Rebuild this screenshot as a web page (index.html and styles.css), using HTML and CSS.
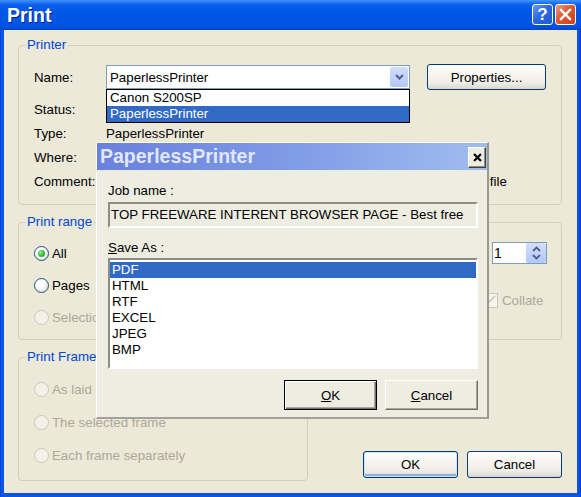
FILE: index.html
```html
<!DOCTYPE html>
<html>
<head>
<meta charset="utf-8">
<title>Print</title>
<link rel="stylesheet" href="styles.css">
</head>
<body>
<div class="window">
  <div class="titlebar">
    <span class="title">Print</span>
    <div class="tbtns">
      <span class="tbtn help">?</span>
      <span class="tbtn close"><svg width="13" height="13" viewBox="0 0 13 13"><path d="M2 2 L11 11 M11 2 L2 11" stroke="#fff" stroke-width="2.4" stroke-linecap="square"/></svg></span>
    </div>
  </div>

  <div class="client">
    <fieldset class="group printer">
      <legend>Printer</legend>
      <div class="pbody">
        <div class="prow name">
          <span>Name:</span>
          <div class="combo">
            <span class="combo-text">PaperlessPrinter</span>
            <span class="combo-btn"><svg width="9" height="6" viewBox="0 0 9 6"><path d="M1 1 L4.5 4.5 L8 1" fill="none" stroke="#4D6185" stroke-width="2"/></svg></span>
            <ul class="droplist">
              <li>Canon S200SP</li>
              <li class="sel">PaperlessPrinter</li>
            </ul>
          </div>
          <button class="xpbtn props">Properties...</button>
        </div>
        <div class="prow"><span>Status:</span></div>
        <div class="prow"><span>Type:</span><span>PaperlessPrinter</span></div>
        <div class="prow"><span>Where:</span></div>
        <div class="prow"><span>Comment:</span><span></span>
          <label class="check"><span class="box"></span><span>Print to file</span></label>
        </div>
      </div>
    </fieldset>

    <div class="row2">
      <fieldset class="group range">
        <legend>Print range</legend>
        <div class="opts">
          <div class="opt"><span class="radio on"><span class="dot"></span></span><span>All</span></div>
          <div class="opt"><span class="radio"></span><span>Pages</span></div>
          <div class="opt dis"><span class="radio"></span><span>Selection</span></div>
        </div>
      </fieldset>
      <div class="group copies">
        <div class="spinrow">
          <div class="spin">
            <span class="spin-val">1</span>
            <span class="spin-btn">
              <svg width="9" height="6" viewBox="0 0 9 6"><path d="M1 5 L4.5 1.5 L8 5" fill="none" stroke="#4D6185" stroke-width="1.8"/></svg>
              <svg width="9" height="6" viewBox="0 0 9 6"><path d="M1 1 L4.5 4.5 L8 1" fill="none" stroke="#4D6185" stroke-width="1.8"/></svg>
            </span>
          </div>
        </div>
        <div class="collate">
          <span class="cbox"><svg width="13" height="13" viewBox="0 0 13 13"><path d="M2 11 L11 2" stroke="#C9C7BA" stroke-width="1.6"/></svg></span>
          <span>Collate</span>
        </div>
      </div>
    </div>

    <div class="row3">
      <fieldset class="group frame">
        <legend>Print Frame</legend>
        <div class="opts frame-opts">
          <div class="opt dis"><span class="radio"></span><span>As laid out on screen</span></div>
          <div class="opt dis"><span class="radio"></span><span>The selected frame</span></div>
          <div class="opt dis"><span class="radio"></span><span>Each frame separately</span></div>
        </div>
      </fieldset>
      <div class="mainbtns">
        <button class="xpbtn default">OK</button>
        <button class="xpbtn">Cancel</button>
      </div>
    </div>
  </div>

  <div class="dlg">
    <div class="dlg-title">
      <span class="dlg-caption">PaperlessPrinter</span>
      <span class="dlg-close"><svg width="9" height="9" viewBox="0 0 9 9"><path d="M1 1 L8 8 M8 1 L1 8" stroke="#000" stroke-width="2.2"/></svg></span>
    </div>
    <div class="dlg-body">
      <div class="dlbl">Job name :</div>
      <div class="field">TOP FREEWARE INTERENT BROWSER PAGE - Best free</div>
      <div class="dlbl save"><u>S</u>ave As :</div>
      <ul class="list">
        <li class="sel">PDF</li>
        <li>HTML</li>
        <li>RTF</li>
        <li>EXCEL</li>
        <li>JPEG</li>
        <li>BMP</li>
      </ul>
      <div class="dlg-btns">
        <button class="cbtn def"><u>O</u>K</button>
        <button class="cbtn"><u>C</u>ancel</button>
      </div>
    </div>
  </div>
</div>
</body>
</html>
```

FILE: styles.css
```css
* { box-sizing: border-box; }
html, body { margin: 0; padding: 0; }
body {
  width: 581px;
  height: 497px;
  overflow: hidden;
  font-family: "Liberation Sans", Arial, sans-serif;
  font-size: 13.3px;
  color: #000;
  background: #0A52E0;
}

.window {
  position: relative;
  width: 581px;
  height: 497px;
  display: flex;
  flex-direction: column;
  background: linear-gradient(90deg, #0831D9 0, #0A5AE8 1px, #0B56E2 3px, #0B56E2 577px, #0A4BDA 580px, #0831D9 581px);
  padding: 0 4px 4px 4px;
}

/* ---------- title bar ---------- */
.titlebar {
  height: 30px;
  margin: 0 -4px;
  display: flex;
  align-items: center;
  padding: 0 5px 0 7px;
  background: linear-gradient(180deg, #3D95FF 0px, #2A7CF4 2px, #0B60EA 5px, #0056E6 12px, #0055E6 22px, #0050DF 27px, #0042CC 30px);
}
.title {
  color: #fff;
  font-weight: bold;
  font-size: 19.5px;
  text-shadow: 1px 1px 0 #0A1A8A;
  margin-top: 1px;
}
.tbtns {
  margin-left: auto;
  display: flex;
  gap: 2px;
  margin-top: -1px;
}
.tbtn {
  width: 21px;
  height: 21px;
  border: 1px solid #fff;
  border-radius: 3px;
  display: flex;
  align-items: center;
  justify-content: center;
  color: #fff;
}
.help {
  background: linear-gradient(135deg, #6A9CF9 0%, #2C68E0 45%, #1E58D4 100%);
  font-weight: bold;
  font-size: 17px;
  line-height: 1;
}
.close {
  background: linear-gradient(135deg, #EF9A7D 0%, #DD5A34 45%, #C9401A 100%);
}

/* ---------- client ---------- */
.client {
  flex: 1;
  background: #ECE9D8;
  padding: 8px 15px 0 14px;
}
.group {
  margin: 0;
  padding: 0;
  min-width: 0;
  border: 1px solid #D0D0BF;
  border-radius: 4px;
}
.group legend {
  margin-left: 6px;
  padding: 0 2px;
  color: #0046D5;
  font-size: 13.3px;
  line-height: 14px;
}

/* printer group */
.printer { width: 544px; height: 167px; }
.pbody { padding: 12px 0 0 15px; }
.prow {
  display: grid;
  grid-template-columns: 72px 321px 119px;
  align-items: center;
  height: 24px;
}
.prow.name { height: 26px; margin-bottom: 7px; }

.combo {
  position: relative;
  width: 304px;
  height: 24px;
  border: 1px solid #7F9DB9;
  background: #fff;
  display: flex;
  align-items: center;
}
.combo-text { flex: 1; padding-left: 3px; }
.combo-btn {
  width: 18px;
  height: 20px;
  margin-right: 1px;
  border-radius: 2px;
  background: linear-gradient(180deg, #D2DEFC 0%, #C1D3FB 50%, #B3C8F6 100%);
  display: flex;
  align-items: center;
  justify-content: center;
}
.droplist {
  position: absolute;
  left: -1px;
  top: 23px;
  width: 304px;
  margin: 0;
  padding: 0;
  list-style: none;
  border: 1px solid #000;
  background: #fff;
}
.droplist li { height: 16px; line-height: 16px; padding-left: 3px; }
.droplist li.sel { background: #316AC5; color: #fff; }

.xpbtn {
  font: inherit;
  color: #000;
  padding: 0;
  border: 1px solid #003C74;
  border-radius: 3px;
  background: linear-gradient(180deg, #FFFFFF 0%, #F7F6F2 35%, #EEEDE7 75%, #E2DFD6 92%, #D6D0C5 100%);
}
.xpbtn.default {
  box-shadow: inset 0 0 0 1px #CEE7FF, inset 0 -2px 0 1px #8FAEEA;
}
.props { width: 119px; height: 26px; }

.check { display: flex; align-items: center; gap: 2px; }
.box { width: 15px; height: 15px; border: 1px solid #1C5180; background: #fff; }

/* row 2 */
.row2 { display: flex; gap: 10px; margin-top: 10px; }
.range { width: 290px; height: 125px; }
.copies { width: 244px; height: 118px; margin-top: 7px; }

.opts {
  display: flex;
  flex-direction: column;
  gap: 12px;
  padding: 14px 0 0 15px;
}
.opt { height: 20px; display: flex; align-items: center; gap: 3px; }
.opt.dis { color: #ACA899; }
.radio {
  width: 15px;
  height: 15px;
  border-radius: 50%;
  border: 1px solid #1C5180;
  background: radial-gradient(circle at 35% 35%, #FFFFFF 35%, #E8E6DD 70%, #D2CFC2 100%);
  display: flex;
  align-items: center;
  justify-content: center;
}
.opt.dis .radio {
  border-color: #CAC8BB;
  background: #F3F1E8;
}
.dot {
  width: 7px;
  height: 7px;
  border-radius: 50%;
  background: radial-gradient(circle at 35% 35%, #9FEA9A 0%, #3CC23C 45%, #1C9A1C 100%);
}

.spinrow { display: flex; justify-content: flex-end; padding: 19px 14px 0 0; }
.spin {
  width: 55px;
  height: 22px;
  border: 1px solid #7F9DB9;
  background: #fff;
  display: flex;
  align-items: center;
}
.spin-val { flex: 1; padding-left: 1px; font-size: 14px; }
.spin-btn {
  width: 20px;
  height: 20px;
  border-radius: 2px;
  background: linear-gradient(180deg, #D2DEFC 0%, #C1D3FB 50%, #B3C8F6 100%);
  display: flex;
  flex-direction: column;
  align-items: center;
  justify-content: center;
  gap: 2px;
}
.collate {
  display: flex;
  align-items: center;
  gap: 4px;
  margin-top: 29px;
  padding-left: 164px;
  color: #ACA899;
}
.cbox {
  width: 15px;
  height: 15px;
  border: 1px solid #CAC8BB;
  background: #F5F4EC;
  display: flex;
  align-items: center;
  justify-content: center;
}

/* row 3 */
.row3 { display: flex; align-items: flex-end; margin-top: 10px; }
.frame { width: 290px; height: 131px; }
.frame-opts { gap: 13px; padding-top: 15px; }
.mainbtns {
  margin-left: auto;
  margin-bottom: 3px;
  display: flex;
  gap: 9px;
}
.mainbtns .xpbtn { width: 95px; height: 27px; }

/* ---------- PaperlessPrinter dialog ---------- */
.dlg {
  position: absolute;
  left: 96px;
  top: 142px;
  width: 393px;
  height: 277px;
  background: #EEEDE2;
  border-left: 1px solid #FFFFFF;
  border-top: 1px solid #FFFFFF;
  border-right: 2px solid #9A9A90;
  border-bottom: 2px solid #A2A29A;
  display: flex;
  flex-direction: column;
}
.dlg-title {
  height: 27px;
  display: flex;
  align-items: center;
  padding: 0 1px 0 3px;
  background: linear-gradient(90deg, #6A80DD 0%, #7690E2 30%, #829FE8 55%, #93B0EC 80%, #A0BCEE 100%);
}
.dlg-caption {
  color: #E0E8FA;
  font-weight: bold;
  font-size: 19.5px;
}
.dlg-close {
  margin-left: auto;
  margin-top: 2px;
  width: 18px;
  height: 21px;
  background: #EEEDE2;
  border: 1px solid;
  border-color: #FFFFFF #404040 #404040 #FFFFFF;
  box-shadow: inset -1px -1px 0 #8C8C84;
  display: flex;
  align-items: center;
  justify-content: center;
}
.dlg-body { padding: 13px 9px 0 11px; }
.dlbl { line-height: 15px; margin-bottom: 4px; }
.dlbl.save { margin-top: 12px; margin-bottom: 3px; }
.field {
  height: 26px;
  border: 2px solid;
  border-color: #8E8D84 #FFFFFF #FFFFFF #8E8D84;
  background: #EEEDE2;
  line-height: 22px;
  padding-left: 1px;
  white-space: nowrap;
  overflow: hidden;
}
.list {
  height: 111px;
  margin: 0;
  padding: 2px 0 0 0;
  list-style: none;
  border: 2px solid;
  border-color: #8E8D84 #FFFFFF #FFFFFF #8E8D84;
  background: #fff;
}
.list li { height: 16px; line-height: 16px; padding-left: 2px; }
.list li.sel { background: #316AC5; color: #fff; }
.dlg-btns {
  display: flex;
  justify-content: flex-end;
  gap: 8px;
  margin-top: 11px;
}
.cbtn {
  font: inherit;
  color: #000;
  width: 93px;
  height: 30px;
  padding: 0;
  background: #EEEDE2;
  border: 1px solid;
  border-color: #FFFFFF #716F64 #716F64 #FFFFFF;
  box-shadow: inset -1px -1px 0 #ACA899;
}
.cbtn.def {
  border: 1px solid #000;
  box-shadow: inset 1px 1px 0 #FFFFFF, inset -1px -1px 0 #716F64, inset -2px -2px 0 #ACA899;
}
```
